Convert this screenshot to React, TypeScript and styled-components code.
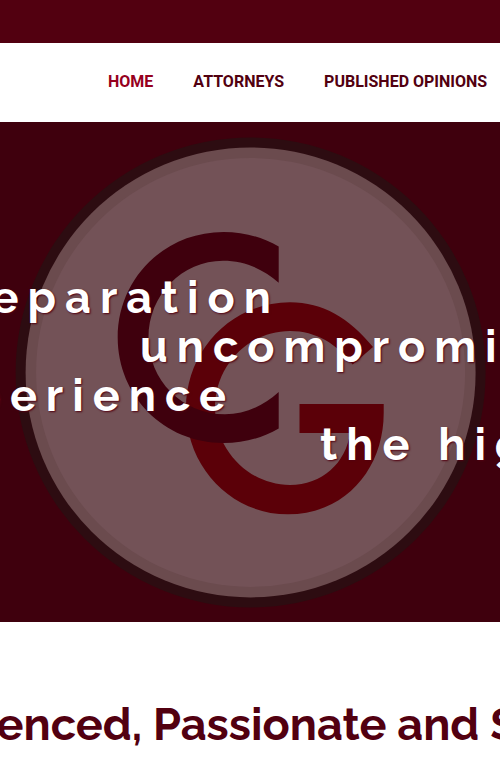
import React from "react";
import styled, { createGlobalStyle } from "styled-components";

const GlobalStyle = createGlobalStyle`
  *, *::before, *::after { box-sizing: border-box; }
  body { margin: 0; background: #fff; overflow-x: hidden; }
`;

const Page = styled.div`
  overflow: hidden;
  color: #520010;
  font-family: Raleway, Lato, sans-serif;
`;

const TopBar = styled.div`
  height: 43px;
  background: #520010;
`;

const Header = styled.header`
  padding: 27px 12px 28px 108px;
`;

const Nav = styled.nav`
  display: flex;
  gap: 40px;
`;

const NavLink = styled.a<{ $active?: boolean }>`
  color: ${(p) => (p.$active ? "#96001e" : "#520010")};
  font: 700 16px/24px Roboto, sans-serif;
  text-decoration: none;
  text-transform: uppercase;
  white-space: nowrap;
`;

const Hero = styled.section`
  display: grid;
  align-items: center;
  overflow: hidden;
  background: #3f000d;
`;

const Emblem = styled.svg`
  grid-area: 1 / 1;
  justify-self: center;
  display: block;
  width: 500px;
  height: 500px;
`;

const Slogan = styled.div`
  grid-area: 1 / 1;
  min-width: 0;
  padding-bottom: 2px;
`;

const SloganLine = styled.p<{ $start?: string; $end?: string }>`
  display: flex;
  justify-content: ${(p) => (p.$end ? "flex-end" : "flex-start")};
  margin: 0;
  padding-left: ${(p) => p.$start ?? "0"};
  padding-right: ${(p) => p.$end ?? "0"};
  color: #fff;
  font-size: 45px;
  font-weight: 700;
  line-height: 49px;
  letter-spacing: 9px;
  text-shadow: 1px 1px 2px #520010;
  white-space: nowrap;
`;

const Intro = styled.section`
  display: flex;
  justify-content: center;
  padding: 76px 0 23px;
`;

const Title = styled.h1`
  margin: 0;
  font-size: 45px;
  font-weight: 700;
  line-height: 53px;
  white-space: nowrap;
`;

const links = ["Home", "Attorneys", "Published Opinions"];

export default function App() {
  return (
    <Page>
      <GlobalStyle />
      <TopBar />
      <Header>
        <Nav aria-label="Main">
          {links.map((label, i) => (
            <NavLink key={label} href="#" $active={i === 0}>
              {label}
            </NavLink>
          ))}
        </Nav>
      </Header>
      <Hero>
        <Emblem viewBox="0 122 500 500" aria-hidden="true">
          <circle cx="250.6" cy="372.4" r="235" fill="#2d0c11" />
          <circle cx="250.6" cy="372.4" r="225" fill="#6b4b4e" />
          <circle cx="250.6" cy="372.4" r="214.5" fill="#735257" />
          <path
            fill="#5b0008"
            d="M373 347C349 318 323 302.3 290 302.3C231 302.3 186 351 186 408C186 467 231 514.3 288 514.3C346 514.3 383.7 468 383.7 413V404H299.5V433H350C346 463 322 485 290 485C249 485 215 450 215 408C215 365 249 331 290 331C316 331 337 344 352.7 364.5Z"
          />
          <path
            fill="#3f000d"
            d="M278.7 246.5C262 237 244 232 223.5 232C164 232 117.7 279 117.7 337.5C117.7 396 164 443 223.5 443C244 443 262 438 278.7 428.5V392C263 406 245 414.3 225 414.3C182 414.3 148.5 380 148.5 337.5C148.5 295 182 260.7 223 260.7C245 260.7 263 269 278.7 282.7Z"
          />
        </Emblem>
        <Slogan>
          <SloganLine $end="44%">preparation</SloganLine>
          <SloganLine $start="28%">uncompromising</SloganLine>
          <SloganLine $end="53%">experience</SloganLine>
          <SloganLine $start="64%">the highest</SloganLine>
        </Slogan>
      </Hero>
      <Intro>
        <Title>Experienced, Passionate and Skilled</Title>
      </Intro>
    </Page>
  );
}
